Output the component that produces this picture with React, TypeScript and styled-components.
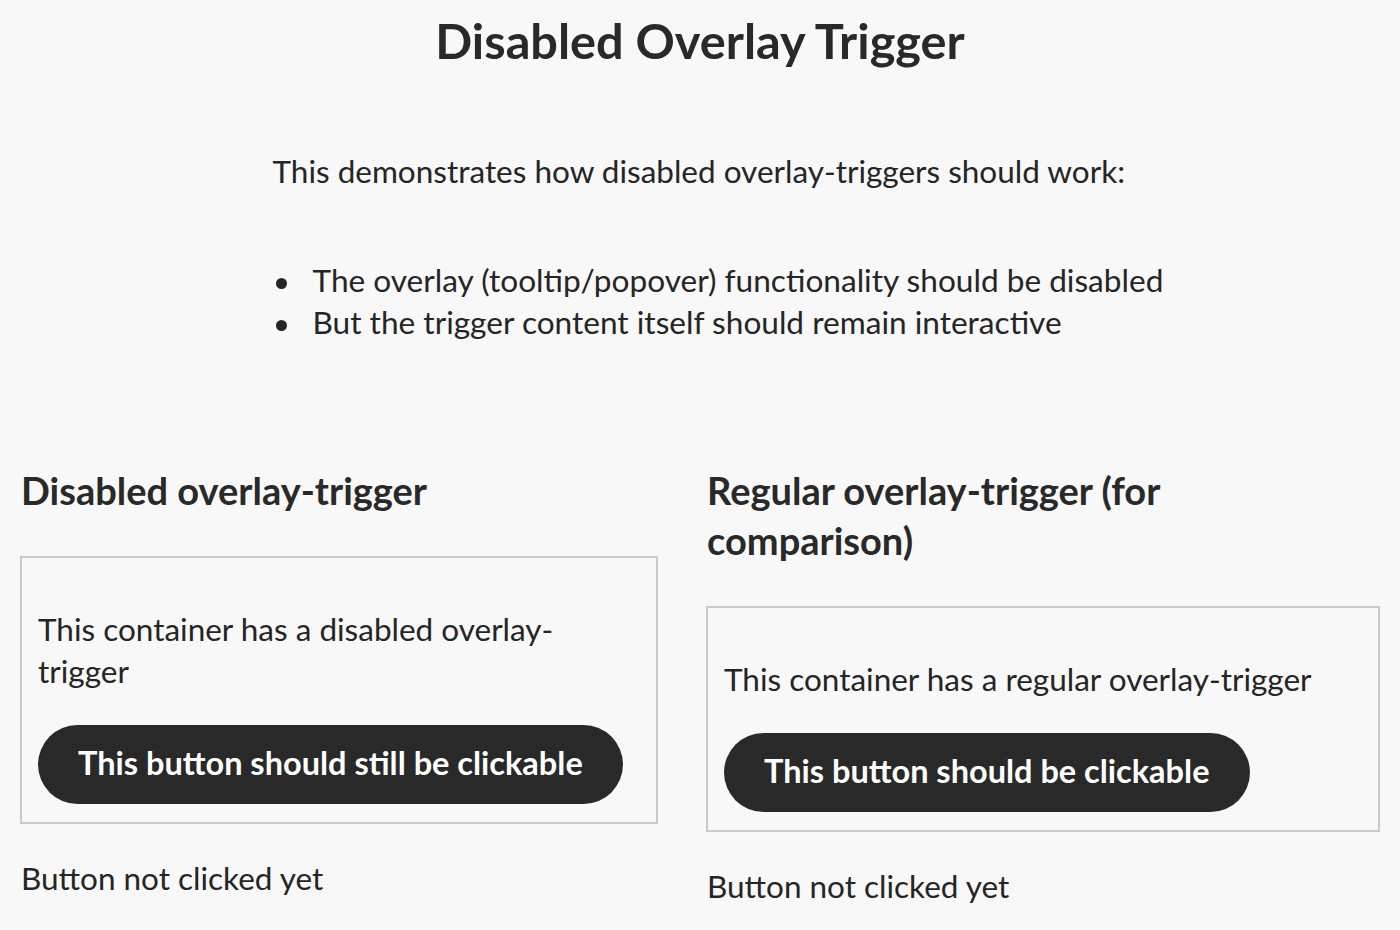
import React, { useState } from "react";
import styled, { createGlobalStyle } from "styled-components";

const GlobalStyle = createGlobalStyle`
  html, body {
    margin: 0;
    padding: 0;
    background: #f8f8f8;
  }
  body {
    font-family: Lato, "Open Sans", sans-serif;
    color: #252525;
  }
`;

const Page = styled.main`
  padding: 12px 20px 40px;
  box-sizing: border-box;
  width: 1400px;
`;

const Title = styled.h1`
  margin: 0;
  font-size: 48.7px;
  line-height: 57.6px;
  font-weight: 700;
  text-align: center;
  color: #292929;
`;

const Intro = styled.section`
  width: 855px;
  margin: 80px auto 0;
`;

const Lead = styled.p`
  margin: 0;
  font-size: 31.5px;
  line-height: 42px;
`;

const Bullets = styled.ul`
  margin: 67px 0 0;
  padding: 0;
  list-style: none;
  font-size: 31.6px;
  line-height: 42px;
`;

const Bullet = styled.li`
  white-space: nowrap;

  &::before {
    content: "";
    display: inline-block;
    width: 11px;
    height: 11px;
    margin: 0 26px 0 3px;
    border-radius: 50%;
    background: #252525;
    vertical-align: middle;
  }
`;

const Columns = styled.div`
  display: grid;
  grid-template-columns: 638px 674px;
  column-gap: 48px;
  align-items: start;
  margin-top: 122px;
`;

const Column = styled.section`
  display: flex;
  flex-direction: column;
`;

const Heading = styled.h2`
  margin: 0 0 41px;
  max-width: 620px;
  font-size: 38px;
  line-height: 50px;
  font-weight: 700;
  color: #292929;
  padding-left: 1px;
`;

const Box = styled.div`
  border: 2px solid #cacaca;
  padding: 18px 16px;
`;

const BoxText = styled.p`
  margin: 32px 0 33px;
  font-size: 31.5px;
  line-height: 42px;
`;

const PillButton = styled.button`
  display: inline-flex;
  align-items: center;
  height: 79px;
  padding: 0 40px 3px;
  border: none;
  border-radius: 40px;
  background: #292929;
  color: #ffffff;
  font-family: Lato, "Open Sans", sans-serif;
  font-size: 32.5px;
  font-weight: 700;
  cursor: pointer;
`;

const Status = styled.p`
  margin: 33px 0 0;
  padding-left: 1px;
  font-size: 31.5px;
  line-height: 42px;
`;

type DemoProps = {
  heading: string;
  text: string;
  buttonLabel: string;
};

function Demo({ heading, text, buttonLabel }: DemoProps) {
  const [clicks, setClicks] = useState(0);
  return (
    <Column>
      <Heading>{heading}</Heading>
      <Box>
        <BoxText>{text}</BoxText>
        <PillButton type="button" onClick={() => setClicks((c) => c + 1)}>
          {buttonLabel}
        </PillButton>
      </Box>
      <Status>
        {clicks === 0
          ? "Button not clicked yet"
          : `Button clicked ${clicks} time${clicks > 1 ? "s" : ""}`}
      </Status>
    </Column>
  );
}

export default function App() {
  return (
    <>
      <GlobalStyle />
      <Page>
        <Title>Disabled Overlay Trigger</Title>
        <Intro>
          <Lead>This demonstrates how disabled overlay-triggers should work:</Lead>
          <Bullets>
            <Bullet>The overlay (tooltip/popover) functionality should be disabled</Bullet>
            <Bullet>But the trigger content itself should remain interactive</Bullet>
          </Bullets>
        </Intro>
        <Columns>
          <Demo
            heading="Disabled overlay-trigger"
            text="This container has a disabled overlay-trigger"
            buttonLabel="This button should still be clickable"
          />
          <Demo
            heading="Regular overlay-trigger (for comparison)"
            text="This container has a regular overlay-trigger"
            buttonLabel="This button should be clickable"
          />
        </Columns>
      </Page>
    </>
  );
}
